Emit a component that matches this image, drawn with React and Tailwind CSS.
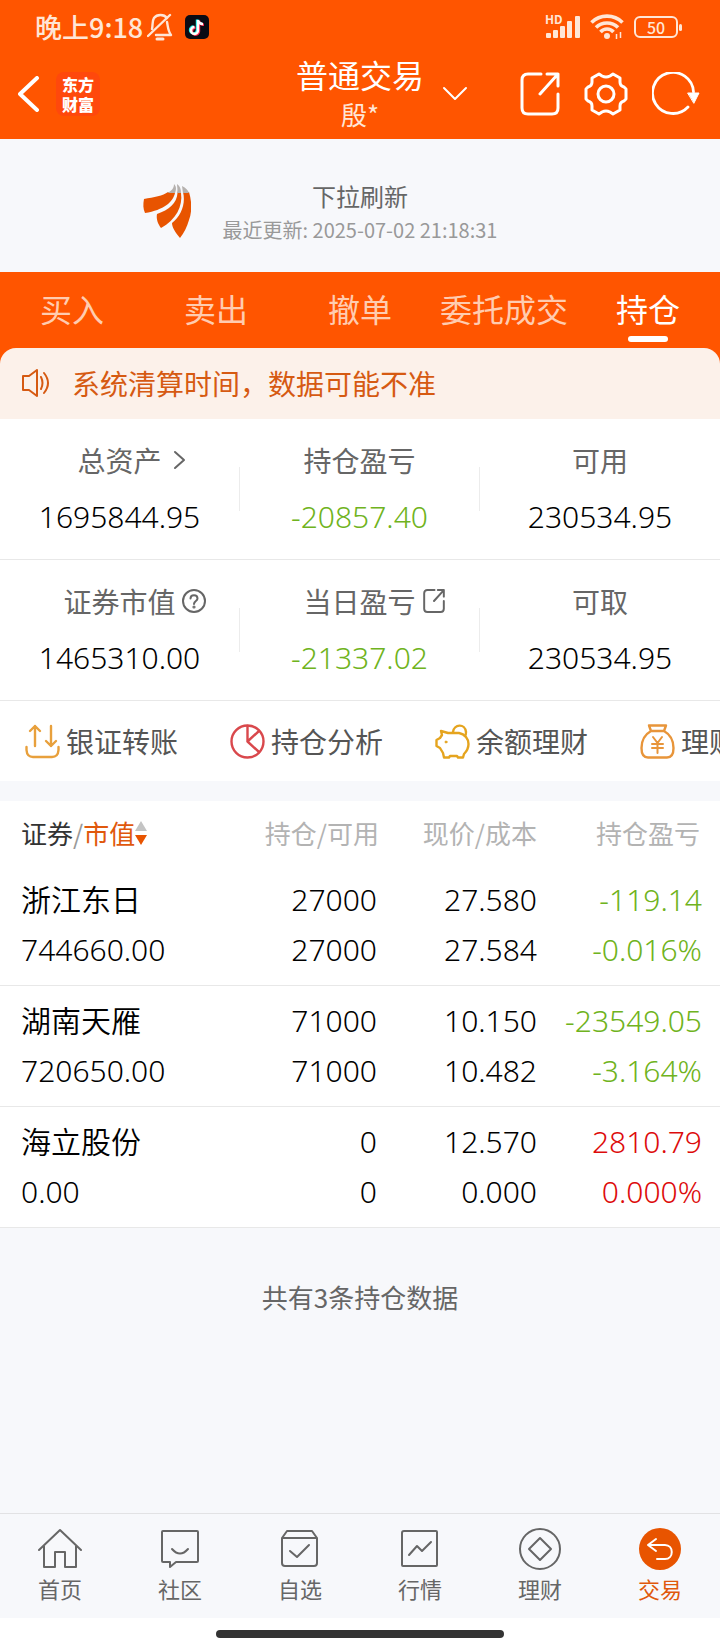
import React from 'react';

const tabs = ['买入', '卖出', '撤单', '委托成交', '持仓'];

const holdings = [
  { name: '浙江东日', value: '744660.00', amount: '27000', usable: '27000', price: '27.580', cost: '27.584', profit: '-119.14', rate: '-0.016%', up: false },
  { name: '湖南天雁', value: '720650.00', amount: '71000', usable: '71000', price: '10.150', cost: '10.482', profit: '-23549.05', rate: '-3.164%', up: false },
  { name: '海立股份', value: '0.00', amount: '0', usable: '0', price: '12.570', cost: '0.000', profit: '2810.79', rate: '0.000%', up: true },
];

const line = { fill: 'none', stroke: 'currentColor', strokeLinecap: 'round', strokeLinejoin: 'round' };

/* ---------- Status bar icons ---------- */

function MutedBell() {
  return (
    <svg className="w-[26px] h-7" viewBox="0 0 26 28" {...line} strokeWidth="2.400">
      <path d="M20 5C17 1 10 1 7 5C5 8 6 12 5 16" />
      <path d="M20 9C21 14 21 18 24 22H9" />
      <path d="M23 2L1 23" />
      <path d="M10 26H16" strokeWidth="3" />
    </svg>
  );
}

function TiktokIcon() {
  const note = 'M13 5V15.500A3.500 3.500 0 1 1 9.500 12M13 5C13.500 7.500 15.500 9 18 9';
  return (
    <svg className="w-6 h-6" viewBox="0 0 24 24" fill="none" strokeWidth="2.400">
      <rect width="24" height="24" rx="5" fill="#0b0b14" />
      <path d={note} stroke="#25f4ee" transform="translate(-1 -0.500)" />
      <path d={note} stroke="#fe2c55" transform="translate(1 0.800)" />
      <path d={note} stroke="#fff" />
    </svg>
  );
}

function SignalIcon() {
  return (
    <svg className="w-[35px] h-6" viewBox="0 0 35 24" fill="currentColor">
      <rect x="1" y="18" width="5" height="5" rx="1" />
      <rect x="8" y="15" width="5" height="8" rx="1" />
      <rect x="15" y="11" width="5" height="12" rx="1" />
      <rect x="22" y="6" width="5" height="17" rx="1" />
      <rect x="30" y="1" width="5" height="22" rx="1" />
    </svg>
  );
}

function WifiIcon() {
  return (
    <svg className="w-[34px] h-[26px]" viewBox="0 0 34 26" fill="none" stroke="currentColor" strokeWidth="3.600">
      <path d="M1.500 8.500C10 0 24 0 32.500 8.500" />
      <path d="M6 13.500C12 7.500 22 7.500 28 13.500" />
      <path d="M10.500 18C14 14 20 14 23.500 18" />
      <circle cx="17" cy="22" r="3" fill="currentColor" stroke="none" />
      <path d="M26.500 20V25M30.500 18V24" strokeWidth="1.500" />
    </svg>
  );
}

/* ---------- Header icons ---------- */

function ShareBox({ className, strokeWidth }) {
  return (
    <svg className={className} viewBox="0 0 40 44" {...line} strokeWidth={strokeWidth}>
      <path d="M21 2H8Q2 2 2 8V36Q2 42 8 42H32Q38 42 38 36V22" />
      <path d="M27 2H38V14M38 2L20 22" />
    </svg>
  );
}

function GearIcon() {
  return (
    <svg className="w-11 h-11" viewBox="0 0 44 44" {...line} strokeWidth="3">
      <path d="M15 2L18 4Q22 6 26 4L29 2L36 6V10Q36 14 40 15L42 17V27L40 29Q36 30 36 34V38L29 42L26 40Q22 38 18 40L15 42L8 38V34Q8 30 4 29L2 27V17L4 15Q8 14 8 10V6Z" />
      <circle cx="22" cy="22" r="8" />
    </svg>
  );
}

function RefreshIcon() {
  return (
    <svg className="w-12 h-11" viewBox="0 0 48 44" {...line} strokeWidth="2.800">
      <path d="M36 35A20.500 20.500 0 1 1 41.500 20" />
      <path d="M36 21H47L42 31Z" fill="currentColor" strokeWidth="1" />
    </svg>
  );
}

function BrandMark() {
  return (
    <svg className="w-12 h-[54px]" viewBox="0 0 48 54">
      <path d="M1 15C11 13 20 12 25 8L32 9C30 18 21 26 2 29C0 25 0 20 1 15Z" fill="#e85400" />
      <path d="M14 30C26 26 34 19 34.500 9L38 9C40 22 33 36 18 44C15 40 13 35 14 30Z" fill="#e85400" />
      <path d="M40 8H46C49 18 49 28 46 36C44 43 41 49 37 54C32 48 29 43 29 39C38 32 43 20 40 8Z" fill="#e85400" />
      <path d="M24 9C29 7 31 4 31 0C34 3 33 6 32 9ZM34 9C35 6 34 3 34 0C37 2 38 5 38 9ZM40 9L39 2C43 4 45 6 46 9Z" fill="#b5b1ae" />
    </svg>
  );
}

function SpeakerIcon() {
  return (
    <svg className="w-7 h-7" viewBox="0 0 28 28" {...line} strokeWidth="2">
      <path d="M1 7H7L15 1V27L7 21H1Z" />
      <path d="M19 8Q22 14 19 20M22 4Q30 14 22 24" />
    </svg>
  );
}

/* ---------- Shortcut icons ---------- */

function TransferIcon() {
  return (
    <svg className="w-[35px] h-[35px]" viewBox="0 0 35 35" {...line} stroke="#e8a03c" strokeWidth="2.400">
      <path d="M10 22V2M5 7L10 2L15 7M26 2V22M21 17L26 22L31 17" />
      <path d="M1.500 23V26Q2 33 8 33H27Q33 33 33.500 26V23" />
    </svg>
  );
}

function PieIcon() {
  return (
    <svg className="w-[35px] h-[35px]" viewBox="0 0 35 35" {...line} stroke="#d9484c" strokeWidth="2.400">
      <circle cx="17.500" cy="17.500" r="16" />
      <path d="M17.500 2V17.500L29 28M17.500 17.500L29 7" />
    </svg>
  );
}

function PiggyIcon() {
  return (
    <svg className="w-[35px] h-[35px]" viewBox="0 0 35 35" {...line} stroke="#e5a41e" strokeWidth="2.400">
      <path d="M6 7L13 9H24C30 10 33.500 15 33.500 20C33.500 25 31 28 29 30L28 33.500H23L22 32H15L14 33.500H9L8 29L5 24L1.500 22V16L5 14L7 11Z" />
      <path d="M18 8C19 0 30 -1 31 8C31 10 31 11 30 12" />
      <circle cx="11" cy="18" r="1" fill="#e5a41e" strokeWidth="1" />
    </svg>
  );
}

function MoneyBagIcon() {
  return (
    <svg className="w-[35px] h-[35px]" viewBox="0 0 35 35" {...line} stroke="#e8953a" strokeWidth="2.400">
      <path d="M9 1.500H26L24 7H11ZM11 7C4 11 1.500 17 1.500 24Q1.500 33.500 8 33.500H27Q33.500 33.500 33.500 24C33.500 17 31 11 24 7" />
      <path d="M13 13L17.500 19L22 13M12 20H23M12 24H23M17.500 19V29" strokeWidth="2" />
    </svg>
  );
}

const shortcuts = [
  { label: '银证转账', icon: <TransferIcon /> },
  { label: '持仓分析', icon: <PieIcon /> },
  { label: '余额理财', icon: <PiggyIcon /> },
  { label: '理财', icon: <MoneyBagIcon /> },
];

/* ---------- Bottom navigation ---------- */

const navItems = [
  { label: '首页', icon: <path d="M1 22L22 2L43 22M6 18V39H17V24H27V39H38V18" /> },
  { label: '社区', icon: <path d="M5 3H39Q40 3 40 4V33Q40 34 39 34H18L12 39V34H5Q4 34 4 33V4Q4 3 5 3ZM14 21Q22 30 30 21" /> },
  { label: '自选', icon: <path d="M4 10L9 3H34L39 10V35Q39 38 36 38H7Q4 38 4 35ZM4 10H39M12 23L19 29L31 17" /> },
  { label: '行情', icon: <path d="M6 3H38Q39 3 39 4V37Q39 38 38 38H5Q4 38 4 37V5Q4 3 6 3ZM11 27L19 18L24 23L33 14" /> },
  { label: '理财', icon: <><circle cx="22" cy="21" r="20" /><path d="M22 10L33 21L22 32L11 21Z" /></> },
  {
    label: '交易',
    active: true,
    icon: <><circle cx="22" cy="21" r="21" fill="#e85400" stroke="none" /><path d="M18 11L10 17L18 23M10 17H27C36 17 36 31 27 31H19" stroke="#fff" /></>,
  },
];

function Stat({ label, icon, value, green, last }) {
  return (
    <div className="flex items-center">
      <div className="flex-1 flex flex-col items-center pt-[21px] pb-5">
        <div className="w-full grid grid-cols-[1fr_auto_1fr] items-center text-[28px] leading-10 text-[#666]">
          <span />
          <span>{label}</span>
          <span className="pl-[6px]">{icon}</span>
        </div>
        <div className={`mt-[15px] text-[30px] leading-[44px] font-[350] font-["Noto_Sans","Noto_Sans_CJK_SC",sans-serif] ${green ? 'text-[#6fb320]' : 'text-black'}`}>{value}</div>
      </div>
      {!last && <div className="w-px h-11 bg-[#ececec]" />}
    </div>
  );
}

export default function App() {
  return (
    <div className='min-h-screen flex flex-col bg-[#f7f8fb] text-[#333] font-["Noto_Sans_CJK_SC",sans-serif]'>
      <header className="bg-[#ff5500] text-white">
        {/* Status bar */}
        <div className="h-[54px] flex items-center justify-between pl-[35px] pr-[38px] text-[#ffe6d6]">
          <div className="flex items-center">
            <span className="text-[27px] leading-10 font-medium">晚上9:18</span>
            <span className="pl-1"><MutedBell /></span>
            <span className="pl-3"><TiktokIcon /></span>
          </div>
          <div className="flex items-center gap-[10px]">
            <div className="relative">
              <span className="absolute -top-1 left-0 text-xs leading-4 font-bold">HD</span>
              <SignalIcon />
            </div>
            <WifiIcon />
            <div className="flex items-center gap-px">
              <span className="w-11 h-[22px] flex items-center justify-center rounded-md border-2 border-current text-base leading-6 font-medium">50</span>
              <span className="w-[3px] h-[7px] rounded-full bg-current" />
            </div>
          </div>
        </div>

        {/* Title bar */}
        <div className="h-[85px] grid grid-cols-[1fr_auto_1fr] items-center pb-[5px]">
          <div className="flex items-center gap-4 pl-[18px]">
            <button type="button" aria-label="返回">
              <svg className="w-[22px] h-9" viewBox="0 0 22 36" {...line} strokeWidth="4">
                <path d="M19 2L2 18L19 34" />
              </svg>
            </button>
            <div className="w-11 h-11 rounded-lg bg-[#ff480c] flex flex-col items-center justify-center text-base leading-5 font-black">
              <span>东方</span>
              <span>财富</span>
            </div>
          </div>
          <div className="text-center">
            <h1 className="text-[32px] leading-10">普通交易</h1>
            <p className="text-[26px] leading-10 text-[#ffe6d6]">殷*</p>
          </div>
          <div className="flex items-center pl-[18px] pr-5">
            <button type="button" aria-label="切换账户">
              <svg className="w-[26px] h-4" viewBox="0 0 26 16" {...line} strokeWidth="2">
                <path d="M2 2L13 13L24 2" />
              </svg>
            </button>
            <div className="ml-auto flex items-center gap-6">
              <button type="button" aria-label="分享"><ShareBox className="w-10 h-11" strokeWidth="3" /></button>
              <button type="button" aria-label="设置"><GearIcon /></button>
              <button type="button" aria-label="刷新"><RefreshIcon /></button>
            </div>
          </div>
        </div>
      </header>

      {/* Pull to refresh */}
      <section className="h-[133px] grid grid-cols-[1fr_auto_1fr] items-center">
        <div className="flex justify-end pr-8 pt-[10px]"><BrandMark /></div>
        <div className="text-center pt-[14px]">
          <p className="text-2xl leading-[34px] text-[#666]">下拉刷新</p>
          <p className="text-xl leading-[34px] text-[#999]">最近更新: 2025-07-02 21:18:31</p>
        </div>
      </section>

      {/* Trade tabs */}
      <div className="bg-[#ff5500]">
        <nav className="h-[76px] grid grid-cols-5">
          {tabs.map((tab) => (
            <button
              key={tab}
              type="button"
              className={`flex flex-col items-center pt-[14px] text-[32px] leading-[44px] whitespace-nowrap ${tab === '持仓' ? 'text-white' : 'text-[#ffccb0]'}`}
            >
              {tab}
              {tab === '持仓' && <span className="mt-[6px] w-10 h-[6px] rounded-full bg-white" />}
            </button>
          ))}
        </nav>
        <div className="h-[71px] flex items-center gap-[22px] px-[22px] pb-[2px] rounded-t-2xl bg-[#fcf1ea] text-[#d65a12]">
          <SpeakerIcon />
          <p className="text-[28px] leading-10">系统清算时间，数据可能不准</p>
        </div>
      </div>

      {/* Assets */}
      <section className="bg-white">
        <div className="grid grid-cols-3 border-b border-[#e8e8e8]">
          <Stat
            label="总资产"
            value="1695844.95"
            icon={
              <svg className="w-6 h-6" viewBox="0 0 24 24" {...line} strokeWidth="2">
                <path d="M7 4L16 12L7 20" />
              </svg>
            }
          />
          <Stat label="持仓盈亏" value="-20857.40" green />
          <Stat label="可用" value="230534.95" last />
        </div>
        <div className="grid grid-cols-3 border-b border-[#e8e8e8]">
          <Stat
            label="证券市值"
            value="1465310.00"
            icon={
              <svg className="w-6 h-6" viewBox="0 0 24 24" {...line} strokeWidth="2">
                <circle cx="12" cy="12" r="11" />
                <path d="M8.500 9.500C8.500 5 15.500 5 15.500 9.500C15.500 12 12 12 12 15" />
                <circle cx="12" cy="18" r="0.600" />
              </svg>
            }
          />
          <Stat label="当日盈亏" value="-21337.02" green icon={<ShareBox className="w-6 h-6" strokeWidth="3.600" />} />
          <Stat label="可取" value="230534.95" last />
        </div>

        {/* Shortcuts */}
        <div className="h-20 flex items-center overflow-hidden pl-[25px]">
          {shortcuts.map((item) => (
            <button key={item.label} type="button" className="w-[205px] shrink-0 flex items-center gap-[6px] text-[28px] leading-10 text-[#555]">
              {item.icon}
              {item.label}
            </button>
          ))}
        </div>
      </section>

      {/* Holdings */}
      <section className="mt-5 bg-white">
        <table className="w-full table-fixed">
          <thead>
            <tr className="h-16 text-[26px] leading-9 text-[#b3b3b3] whitespace-nowrap">
              <th className="pl-[21px] text-left font-normal">
                <button type="button" className="flex items-center">
                  <span className="text-[#333]">证券</span>
                  <span className="text-[#999]">/</span>
                  <span className="text-[#e0580c]">市值</span>
                  <svg className="w-3 h-6" viewBox="0 0 12 24">
                    <path d="M6 0L12 10H0Z" fill="#c4c4c4" />
                    <path d="M6 24L12 14H0Z" fill="#e85400" />
                  </svg>
                </button>
              </th>
              <th className="w-[150px] text-right font-normal">持仓/可用</th>
              <th className="w-[158px] text-right font-normal">现价/成本</th>
              <th className="w-[183px] pr-5 text-right font-normal">持仓盈亏</th>
            </tr>
          </thead>
          <tbody className='text-[30px] leading-[50px] font-[350] text-black text-right font-["Noto_Sans","Noto_Sans_CJK_SC",sans-serif]'>
            {holdings.map((row) => (
              <tr key={row.name} className="border-b border-[#e8e8e8]">
                <td className="py-[10px] pl-[21px] text-left">
                  <div>{row.name}</div>
                  <div>{row.value}</div>
                </td>
                <td className="py-[10px] pr-[2px]">
                  <div>{row.amount}</div>
                  <div>{row.usable}</div>
                </td>
                <td className="py-[10px]">
                  <div>{row.price}</div>
                  <div>{row.cost}</div>
                </td>
                <td className={`py-[10px] pr-[18px] ${row.up ? 'text-[#dd0b0b]' : 'text-[#6fb320]'}`}>
                  <div>{row.profit}</div>
                  <div>{row.rate}</div>
                </td>
              </tr>
            ))}
          </tbody>
        </table>
      </section>

      <p className="py-[49px] text-center text-[26px] leading-10 text-[#666]">共有3条持仓数据</p>

      {/* Bottom navigation */}
      <footer className="mt-auto">
        <nav className="h-[105px] grid grid-cols-6 border-t border-[#e2e2e4]">
          {navItems.map((item) => (
            <a key={item.label} href="#" className={`flex flex-col items-center pt-[14px] text-[22px] leading-8 ${item.active ? 'text-[#e0580c]' : 'text-[#666]'}`}>
              <svg className="w-11 h-[43px] mb-px" viewBox="0 0 44 43" {...line} strokeWidth="2">
                {item.icon}
              </svg>
              {item.label}
            </a>
          ))}
        </nav>
        <div className="h-8 flex items-center justify-center bg-white">
          <div className="w-2/5 h-2 rounded-full bg-[#333]" />
        </div>
      </footer>
    </div>
  );
}
